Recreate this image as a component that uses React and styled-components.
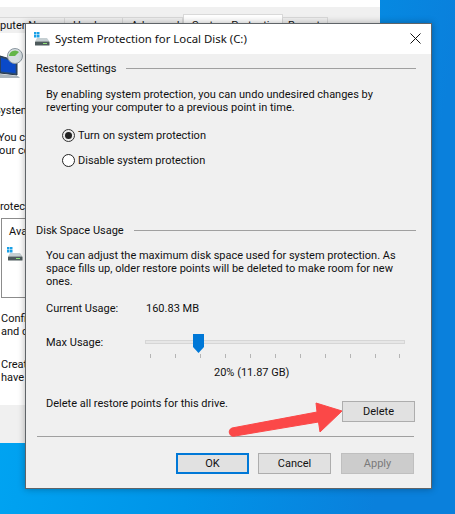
import React from 'react';
import styled, {createGlobalStyle} from 'styled-components';

const Global = createGlobalStyle`
  html, body { margin: 0; padding: 0; background: #0078d7; }
  * { box-sizing: border-box; }
`;

const Desktop = styled.div`
  position: relative;
  width: 455px;
  height: 514px;
  overflow: hidden;
  font-family: Roboto, "Noto Sans", sans-serif;
  font-size: 11px;
  color: #111;
  background: linear-gradient(100deg, #00a9f5 0%, #0094e8 50%, #0a80dc 85%);
`;

const BackWindow = styled.div`
  width: 380px;
  height: 443px;
  background: #fff;
  padding-top: 7px;
  display: flex;
  flex-direction: column;
`;

const TabStrip = styled.div`
  height: 26px;
  background: #f0f0f0;
  display: flex;
  align-items: flex-end;
  overflow: hidden;
`;

const Tab = styled.div`
  flex: none;
  width: ${p => p.$w}px;
  height: ${p => (p.$on ? 19 : 16)}px;
  background: ${p => (p.$on ? '#fff' : '#f0f0f0')};
  border: 1px solid #d9d9d9;
  border-bottom: 0;
  border-left-width: ${p => (p.$on ? 1 : 0)}px;
  line-height: ${p => (p.$on ? 22 : 16)}px;
  padding-left: ${p => p.$pl}px;
  text-indent: ${p => p.$indent || 0}px;
  white-space: nowrap;
  overflow: hidden;
`;

const BackBody = styled.div`
  flex: 1;
  display: flex;
  flex-direction: column;
  overflow: hidden;
  white-space: nowrap;
  line-height: 13px;
`;

const BackLine = styled.div`
  margin-top: ${p => p.$mt || 0}px;
  margin-left: ${p => p.$ml || 0}px;
  text-indent: ${p => p.$indent || 0}px;
`;

const BackBox = styled.div`
  margin: 5px 0 0 1px;
  width: 100px;
  height: 80px;
  flex: none;
  border: 1px solid #8c8c8c;
  padding: 6px 0 0 7px;
`;

const BackFooter = styled.div`
  height: 38px;
  background: #f0f0f0;
`;

const Dialog = styled.div`
  position: absolute;
  left: 25px;
  top: 23px;
  width: 407px;
  height: 466px;
  background: #f0f0f0;
  border: 1px solid #5f6468;
  box-shadow: 0 0 7px rgba(0, 0, 0, 0.3);
  display: flex;
  flex-direction: column;
`;

const TitleBar = styled.div`
  height: 30px;
  background: #fff;
  display: flex;
  align-items: center;
  padding: 0 10px 1px 8px;
  gap: 5px;
`;

const Title = styled.div`
  flex: 1;
  white-space: nowrap;
  font-family: "Noto Sans", sans-serif;
  font-size: 11.4px;
`;

const Content = styled.div`
  flex: 1;
  padding: 6px 16px 0 10px;
  display: flex;
  flex-direction: column;
`;

const GroupHead = styled.div`
  display: flex;
  align-items: center;
  gap: 10px;
  height: 16px;
  margin: ${p => p.$mt || 0}px -1px 0 0;
  white-space: nowrap;
  &::after {
    content: '';
    flex: 1;
    height: 1px;
    background: #a0a0a0;
  }
`;

const Para = styled.p`
  margin: ${p => p.$mt || 0}px -8px 0 10px;
  line-height: 13px;
  white-space: pre;
`;

const RadioRow = styled.label`
  display: flex;
  align-items: center;
  gap: 3px;
  height: 14px;
  margin: ${p => p.$mt}px 0 0 26px;
`;

const RadioCircle = styled.span`
  width: 13px;
  height: 13px;
  border-radius: 50%;
  border: 1px solid #222;
  background: #fff;
  display: flex;
  align-items: center;
  justify-content: center;
  flex: none;
  ${p => p.$on && `
    border-color: #333;
    background: #ececec;
    &::after {
      content: '';
      width: 7px;
      height: 7px;
      border-radius: 50%;
      background: #222;
    }
  `}
`;

const InfoRow = styled.div`
  display: flex;
  align-items: center;
  margin: ${p => p.$mt}px 0 0 10px;
  height: 14px;
`;

const InfoLabel = styled.span`
  width: 100px;
  flex: none;
`;

const SliderWrap = styled.div`
  position: relative;
  width: 260px;
  height: 32px;
  flex: none;
  margin-left: -1px;
`;

const Track = styled.div`
  position: absolute;
  left: 0;
  right: 0;
  top: 14px;
  height: 4px;
  background: #e7e7e7;
  border: 1px solid #d6d6d6;
`;

const Tick = styled.i`
  position: absolute;
  left: ${p => p.$x}px;
  top: 28px;
  width: 1px;
  height: 4px;
  background: #b5b5b5;
`;

const Thumb = styled.svg`
  position: absolute;
  left: 48px;
  top: 8px;
`;

const Percent = styled.div`
  margin-top: 17px;
  padding-left: 178px;
  line-height: 14px;
`;

const DeleteRow = styled.div`
  display: flex;
  align-items: flex-start;
  justify-content: space-between;
  margin: 17px 0 0 10px;
  height: 25px;
  line-height: 14px;
`;

const WinButton = styled.div`
  width: 73px;
  height: 21px;
  margin-top: ${p => p.$mt || 0}px;
  margin-right: ${p => (p.$primary ? -1 : 0)}px;
  background: ${p => (p.$disabled ? '#cccccc' : '#e1e1e1')};
  border: ${p => (p.$primary ? '2px solid #0078d7' : `1px solid ${p.$disabled ? '#bfbfbf' : '#adadad'}`)};
  color: ${p => (p.$disabled ? '#7a7a7a' : '#111')};
  display: flex;
  align-items: center;
  justify-content: center;
  flex: none;
`;

const Separator = styled.div`
  height: 1px;
  background: #a0a0a0;
  margin: 14px 1px 0 1px;
`;

const ButtonRow = styled.div`
  display: flex;
  justify-content: flex-end;
  gap: 10px;
  margin-top: 16px;
  padding-right: 1px;
`;

const ArrowSvg = styled.svg`
  position: absolute;
  left: 0;
  top: 0;
  pointer-events: none;
`;

const DriveIcon = () => (
    <svg width="16" height="14" viewBox="0 0 16 14" style={{flex: 'none'}}>
        <rect x="0" y="0" width="2.5" height="2.5" fill="#19a0e6"/>
        <rect x="3" y="0" width="2.5" height="2.5" fill="#19a0e6"/>
        <rect x="0" y="3" width="2.5" height="2.5" fill="#19a0e6"/>
        <rect x="3" y="3" width="2.5" height="2.5" fill="#19a0e6"/>
        <path d="M3 6 H13 L15.5 9.5 H1 Z" fill="#c5cfd2"/>
        <rect x="1" y="9.5" width="14.5" height="4" rx="0.6" fill="#4d5a5c"/>
        <rect x="9" y="11" width="4" height="1" fill="#8fe07b"/>
    </svg>
);

const SystemIcon = () => (
    <svg width="24" height="31" viewBox="0 0 24 31" style={{display: 'block'}}>
        <path d="M0 8 L17 13 V27 L0 25 Z" fill="#2a4d78" stroke="#27364a" strokeWidth="1"/>
        <path d="M1 10 L15.5 14 V25 L1 23.5 Z" fill="#0a49c8"/>
        <path d="M0 26 L18 28 L20 30 L0 30 Z" fill="#aab4bc"/>
        <circle cx="15" cy="8" r="7.5" fill="#d6dde2" stroke="#8b979f" strokeWidth="1"/>
        <path d="M9 8 A6 6 0 0 1 19 4 L15 8 Z" fill="#63b54a"/>
    </svg>
);

const TICKS = [5, 30, 55, 80, 105, 130, 155, 180, 205, 230, 254];

const App = () => {
    return (
        <Desktop>
            <Global/>
            <BackWindow>
                <TabStrip>
                    <Tab $w={65} $pl={0} $indent={-23}>Computer Name</Tab>
                    <Tab $w={58} $pl={8}>Hardware</Tab>
                    <Tab $w={60} $pl={8}>Advanced</Tab>
                    <Tab $w={100} $pl={8} $on>System Protection</Tab>
                    <Tab $w={45} $pl={5}>Remote</Tab>
                </TabStrip>
                <BackBody>
                    <BackLine $mt={15}><SystemIcon/></BackLine>
                    <BackLine $mt={25} $indent={-6}>System</BackLine>
                    <BackLine $mt={14} $indent={-2}>You can</BackLine>
                    <BackLine $indent={-6}>your computer</BackLine>
                    <BackLine $mt={43} $indent={-7}>Protection</BackLine>
                    <BackBox>
                        <div>Available</div>
                        <BackLine $mt={9} $ml={-2}><DriveIcon/></BackLine>
                    </BackBox>
                    <BackLine $mt={14} $ml={1}>Configure</BackLine>
                    <BackLine $ml={1}>and create</BackLine>
                    <BackLine $mt={20} $ml={1}>Create</BackLine>
                    <BackLine $ml={1}>have</BackLine>
                </BackBody>
                <BackFooter/>
            </BackWindow>

            <Dialog>
                <TitleBar>
                    <DriveIcon/>
                    <Title>System Protection for Local Disk (C:)</Title>
                    <svg width="11" height="11" viewBox="0 0 11 11">
                        <path d="M0.5 0.5 L10.5 10.5 M10.5 0.5 L0.5 10.5" stroke="#111" strokeWidth="1" fill="none"/>
                    </svg>
                </TitleBar>
                <Content>
                    <GroupHead>Restore Settings</GroupHead>
                    <Para $mt={12}>{'By enabling system protection, you can undo undesired changes by\nreverting your computer to a previous point in time.'}</Para>
                    <RadioRow $mt={14}><RadioCircle $on/>Turn on system protection</RadioRow>
                    <RadioRow $mt={11}><RadioCircle/>Disable system protection</RadioRow>
                    <GroupHead $mt={55}>Disk Space Usage</GroupHead>
                    <Para $mt={11}>{'You can adjust the maximum disk space used for system protection. As\nspace fills up, older restore points will be deleted to make room for new\nones.'}</Para>
                    <InfoRow $mt={13}><InfoLabel>Current Usage:</InfoLabel>160.83 MB</InfoRow>
                    <InfoRow $mt={20}>
                        <InfoLabel>Max Usage:</InfoLabel>
                        <SliderWrap>
                            <Track/>
                            {TICKS.map(x => <Tick key={x} $x={x}/>)}
                            <Thumb width="11" height="19" viewBox="0 0 11 19">
                                <path d="M0 0 H11 V13 L5.5 19 L0 13 Z" fill="#0078d7"/>
                            </Thumb>
                        </SliderWrap>
                    </InfoRow>
                    <Percent>20% (11.87 GB)</Percent>
                    <DeleteRow>
                        Delete all restore points for this drive.
                        <WinButton $mt={4}>Delete</WinButton>
                    </DeleteRow>
                    <Separator/>
                    <ButtonRow>
                        <WinButton $primary>OK</WinButton>
                        <WinButton>Cancel</WinButton>
                        <WinButton $disabled>Apply</WinButton>
                    </ButtonRow>
                </Content>
            </Dialog>

            <ArrowSvg width="455" height="514" viewBox="0 0 455 514">
                <path d="M232 428 L317 412 L316 403 L342 411 L320 432 L318.5 422 L235 436 A4 4 0 0 1 232 428 Z" fill="#fb4848" stroke="#fb4848" strokeWidth="1" strokeLinejoin="round"/>
            </ArrowSvg>
        </Desktop>
    );
};

export default App;
